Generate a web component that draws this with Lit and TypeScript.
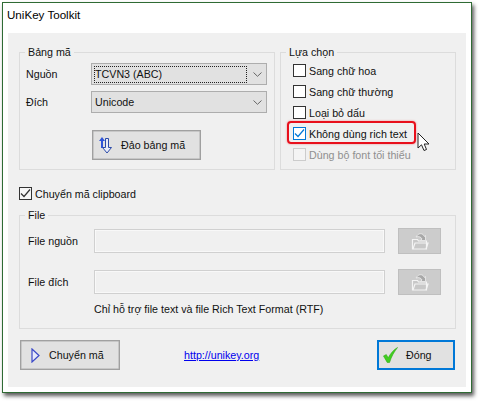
import { LitElement, html, css } from "lit";
import { customElement } from "lit/decorators.js";

const chevron = html`<svg class="chev" width="9" height="5" viewBox="0 0 9 5"><path d="M.5 .5l4 3.800 4-3.800" fill="none" stroke="#666" stroke-width="1"/></svg>`;
const swapIcon = html`<svg width="15" height="17" viewBox="0 0 15 17"><path d="M3 0L0 4h2v7h2V4h2z" fill="#2f55d8"/><path d="M6.500 1.500h3v9h3l-4.500 5.500-4.500-5.500h3z" fill="#e8ecf8" stroke="#2b4aa8" stroke-width="1"/></svg>`;
const playIcon = html`<svg width="9" height="15" viewBox="0 0 9 15"><path d="M1 1L8 7.500 1 14z" fill="#e6e9fb" stroke="#3a48c8" stroke-width="1.200"/></svg>`;
const checkIcon = html`<svg width="15" height="16" viewBox="0 0 16 17"><path d="M.5 9.500l3-1.500 2 3.500C8 7 11 3 15.500 .5 12 5 9 10 7 16.500H4.500z" fill="#3fcf1f" stroke="#2ea815" stroke-width=".6"/></svg>`;
const folderIcon = html`<svg width="18" height="19" viewBox="0 0 18 19"><path d="M1.500 7.500h5l1 1.500h8v8h-14z" fill="#c8c8c8" stroke="#f4f4f4" stroke-width="1.200"/><path d="M2 17l2-6h13l-2 6" fill="none" stroke="#f4f4f4" stroke-width="1.200"/><path d="M5 5C7 1.500 10 1 12 2.500l1.500 2 1-1v5h-5l1.500-1.500C10 5 8 4 5 5z" fill="#a8a8a8" stroke="#eee" stroke-width=".8"/></svg>`;
const tick = html`<svg class="tick" width="11" height="11" viewBox="0 0 11 11"><path d="M1 5.500l3 3L10 1.500" fill="none" stroke="currentColor" stroke-width="1.200"/></svg>`;

@customElement("app-root")
export class AppRoot extends LitElement {
  static styles = css`
    :host { display: block; width: 480px; height: 401px; background: #fff; overflow: hidden; position: relative;
      font: 10.700px "Liberation Sans", Arial, sans-serif; color: #111; white-space: nowrap; }
    * { box-sizing: border-box; }
    .window { margin: 2px 0 0 2px; width: 470px; height: 391px; border: 1px solid #2f6b34; background: #fff;
      box-shadow: 2px 3px 4px rgba(0,0,0,.65); display: flex; flex-direction: column; padding: 0 5px 5px; }
    .title { height: 30px; flex: none; display: flex; align-items: center; padding: 0 0 6px; margin: -1px 0 0 -1px; font-size: 11.600px; color: #000; }
    .client { flex: 1; background: #f0f0f0; padding: 19px 10px 0 11px; display: flex; flex-direction: column; margin-top: 1px; }
    .top { display: flex; gap: 5px; height: 118px; }
    .group { border: 1px solid #dcdcdc; position: relative; }
    .legend { position: absolute; top: -8px; left: 5px; padding: 0 3px; background: #f0f0f0; line-height: 14px; }
    .codes { width: 256px; padding: 10px 7px 0 6px; display: flex; flex-direction: column; }
    .codeRow { display: flex; align-items: center; height: 22px; margin-bottom: 6px; }
    .codeRow label { width: 65px; }
    .combo { width: 176px; height: 22px; background: #e1e1e1; border: 1px solid #adadad; display: flex; align-items: center; justify-content: space-between; padding: 0 4px 0 2px; }
    .combo span { height: 17px; line-height: 15px; flex: 1; margin-right: 6px; border: 1px solid transparent; }
    .combo.focus span { border: 1px dotted #222; }
    .btn { background: #e1e1e1; border: 1px solid #a0a0a0; box-shadow: inset 0 0 0 .5px #adadad; height: 30px; display: flex; align-items: center; color: #111; }
    .swap { width: 109px; margin: 11px 0 0 66px; padding-left: 6px; gap: 7px; }
    .opts { width: 176px; padding: 7px 0 0 12px; }
    .opt { display: flex; align-items: center; height: 21px; gap: 3px; position: relative; }
    .box { width: 13px; height: 13px; border: 1px solid #333; background: #fff; display: flex; align-items: center; justify-content: center; flex: none; }
    .opt.on .box { border-color: #0078d7; color: #0078d7; }
    .opt.off { color: #8f8f8f; }
    .opt.off .box { border-color: #ccc; background: #f4f4f4; }
    .hl { position: absolute; left: -6px; top: -2px; width: 129px; height: 23px; border: 2px solid #e8101c; border-radius: 4px; box-shadow: 0 0 2px rgba(232,16,28,.5); pointer-events: none; }
    .cursor { position: absolute; left: 417px; top: 132px; }
    .clip { display: flex; align-items: center; gap: 3px; margin-top: 16px; height: 15px; }
    .clip .box { background: #f6f6f6; color: #333; }
    .file { margin-top: 14px; width: 437px; height: 114px; padding: 12px 14px 0 8px; display: flex; flex-direction: column; gap: 15px; }
    .fileRow { display: flex; align-items: center; height: 26px; }
    .fileRow label { width: 66px; }
    .input { width: 291px; height: 24px; border: 1px solid #d0d0d0; background: #f0f0f0; box-shadow: inset 0 0 0 .5px #fff; }
    .browse { width: 43px; height: 26px; margin-left: 13px; background: #cccccc; border: 1px solid #bfbfbf; display: flex; align-items: center; justify-content: center; }
    .note { margin: -8px 0 0 66px; line-height: 15px; }
    .bottom { display: flex; align-items: center; margin-top: 11px; height: 30px; padding-left: 1px; }
    .run { width: 100px; padding-left: 10px; gap: 9px; }
    .link { color: #0000ee; text-decoration: underline; margin-left: 64px; }
    .close { width: 78px; margin-left: auto; margin-right: 1px; border: 2px solid #0078d7; box-shadow: none; padding-left: 4px; gap: 8px; }
  `;

  render() {
    return html`
      <div class="window">
        <div class="title">UniKey Toolkit</div>
        <div class="client">
          <div class="top">
            <div class="group codes">
              <span class="legend">Bảng mã</span>
              <div class="codeRow"><label>Nguồn</label><div class="combo focus"><span>TCVN3 (ABC)</span>${chevron}</div></div>
              <div class="codeRow"><label>Đích</label><div class="combo"><span>Unicode</span>${chevron}</div></div>
              <div class="btn swap">${swapIcon}<span>Đảo bảng mã</span></div>
            </div>
            <div class="group opts">
              <span class="legend">Lựa chọn</span>
              <div class="opt"><div class="box"></div><span>Sang chữ hoa</span></div>
              <div class="opt"><div class="box"></div><span>Sang chữ thường</span></div>
              <div class="opt"><div class="box"></div><span>Loại bỏ dấu</span></div>
              <div class="opt on"><div class="box">${tick}</div><span>Không dùng rich text</span><div class="hl"></div></div>
              <div class="opt off"><div class="box"></div><span>Dùng bộ font tối thiểu</span></div>
            </div>
          </div>
          <div class="clip"><div class="box">${tick}</div><span>Chuyển mã clipboard</span></div>
          <div class="group file">
            <span class="legend">File</span>
            <div class="fileRow"><label>File nguồn</label><div class="input"></div><div class="browse">${folderIcon}</div></div>
            <div class="fileRow"><label>File đích</label><div class="input"></div><div class="browse">${folderIcon}</div></div>
            <div class="note">Chỉ hỗ trợ file text và file Rich Text Format (RTF)</div>
          </div>
          <div class="bottom">
            <div class="btn run">${playIcon}<span>Chuyển mã</span></div>
            <span class="link">http://unikey.org</span>
            <div class="btn close">${checkIcon}<span>Đóng</span></div>
          </div>
        </div>
      </div>
      <svg class="cursor" width="14" height="20" viewBox="0 0 14 20"><path d="M1 1v15l3.500-3.200L7 18.500l2.500-1L7.200 12H12z" fill="#fff" stroke="#222" stroke-width="1"/></svg>
    `;
  }
}
